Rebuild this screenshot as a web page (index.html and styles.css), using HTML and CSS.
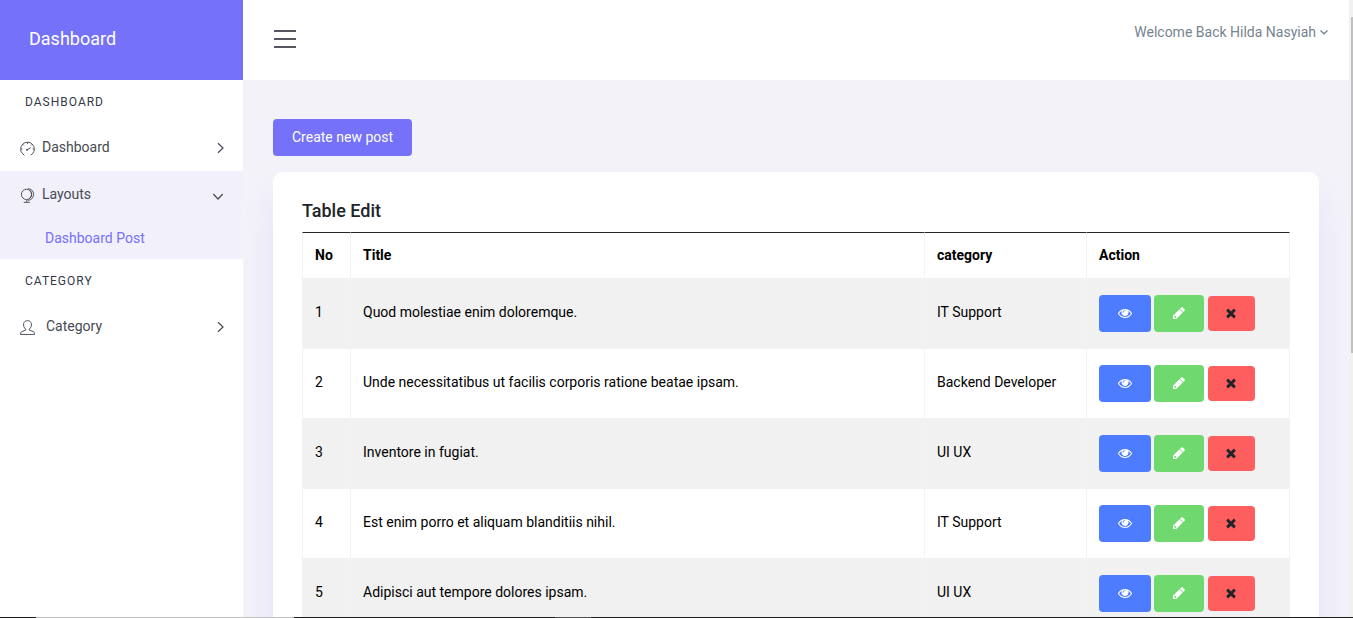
FILE: index.html
```html
<!DOCTYPE html>
<html lang="en">
<head>
<meta charset="utf-8">
<title>Dashboard</title>
<link rel="stylesheet" href="styles.css">
</head>
<body>
<svg class="sprite" aria-hidden="true">
  <symbol id="eye" viewBox="0 0 1792 1792"><path d="M1664 960q-152-236-381-353 61 104 61 225 0 185-131.500 316.500t-316.500 131.500-316.500-131.500-131.500-316.500q0-121 61-225-229 117-381 353 133 205 333.500 326.500t434.500 121.500 434.500-121.500 333.500-326.500zm-720-384q0-20-14-34t-34-14q-125 0-214.500 89.500t-89.500 214.500q0 20 14 34t34 14 34-14 14-34q0-86 61-147t147-61q20 0 34-14t14-34zm848 384q0 34-20 69-140 230-376.500 368.500t-499.500 138.500-499.500-139-376.500-368q-20-35-20-69t20-69q140-229 376.500-368t499.500-139 499.500 139 376.500 368q20 35 20 69z"/></symbol>
  <symbol id="pencil" viewBox="0 0 1792 1792"><path d="M491 1536l91-91-235-235-91 91v107h128v128h107zm469-1120l416 416-832 832h-416v-416zm683 96q0 53-37 90l-166 166-416-416 166-165q36-38 90-38 53 0 91 38l235 234q37 39 37 91z"/></symbol>
  <symbol id="times" viewBox="0 0 1792 1792"><path d="M1490 1322q0 40-28 68l-136 136q-28 28-68 28t-68-28l-294-294-294 294q-28 28-68 28t-68-28l-136-136q-28-28-28-68t28-68l294-294-294-294q-28-28-28-68t28-68l136-136q28-28 68-28t68 28l294 294 294-294q28-28 68-28t68 28l136 136q28 28 28 68t-28 68l-294 294 294 294q28 28 28 68z"/></symbol>
  <symbol id="chevron" viewBox="0 0 12 12"><path d="M4 1.300l5 4.700-5 4.700" fill="none" stroke="currentColor" stroke-width="1.200"/></symbol>
  <symbol id="caret" viewBox="0 0 10 10"><path d="M1.500 3.500l3.500 3.300 3.500-3.300" fill="none" stroke="currentColor" stroke-width="1.300"/></symbol>
</svg>
<div class="app">
  <aside class="sidebar">
    <a class="brand" href="#">Dashboard</a>
    <nav class="menu">
      <h2 class="menu-label">Dashboard</h2>
      <a class="menu-item" href="#">
        <svg class="menu-icon" viewBox="0 0 16 16"><path d="M4.500 15L2.700 13.600A7.300 7.300 0 1 1 13.300 13.600L11.500 15M8 1.500v1.700M1 8.500h1.500M13.500 8.500H15M3 3.500l1.200 1.200M13 3.500l-1.200 1.200M7.500 9.500l4-2.500"/><circle cx="7.500" cy="9.400" r=".7"/></svg>
        <span class="menu-text">Dashboard</span>
        <svg class="arrow"><use href="#chevron"/></svg>
      </a>
      <div class="menu-group">
        <a class="menu-item" href="#">
          <svg class="menu-icon" viewBox="0 0 16 16"><circle cx="7" cy="6.800" r="5.500"/><path d="M8.500 .8C16.500 .8 16.500 12.500 8.500 13.200M10.500 2.500Q14 6.500 10.500 11M7.200 12.500V15M4 15.300h6.500"/></svg>
          <span class="menu-text">Layouts</span>
          <svg class="arrow arrow-open"><use href="#chevron"/></svg>
        </a>
        <a class="submenu-item" href="#">Dashboard Post</a>
      </div>
      <h2 class="menu-label">Category</h2>
      <a class="menu-item" href="#">
        <svg class="menu-icon" viewBox="0 0 16 16"><path d="M6 9.700C2.300 6.500 3.300 .7 8 .7S13.700 6.500 10 9.700V10.800L14.500 12.500Q15.400 13 15.400 15.400H.6Q.6 13 1.500 12.500L6 10.800Z"/></svg>
        <span class="menu-text menu-text-wide">Category</span>
        <svg class="arrow"><use href="#chevron"/></svg>
      </a>
    </nav>
  </aside>
  <div class="page">
    <header class="topbar">
      <button class="hamburger" type="button" aria-label="Toggle menu"><svg class="bars" viewBox="0 0 22 18"><path d="M0 1h22M0 9h22M0 17h22"/></svg></button>
      <button class="user" type="button">Welcome Back Hilda Nasyiah <svg class="caret"><use href="#caret"/></svg></button>
    </header>
    <main class="content">
      <a class="btn btn-primary" href="#">Create new post</a>
      <section class="card">
        <h1 class="card-title">Table Edit</h1>
        <table class="posts">
          <colgroup><col class="col-no"><col><col class="col-category"><col class="col-action"></colgroup>
          <thead><tr><th>No</th><th>Title</th><th>category</th><th>Action</th></tr></thead>
          <tbody>
            <tr><td>1</td><td>Quod molestiae enim doloremque.</td><td>IT Support</td><td><a class="btn btn-view" href="#" aria-label="View"><svg class="icon"><use href="#eye"/></svg></a> <a class="btn btn-edit" href="#" aria-label="Edit"><svg class="icon"><use href="#pencil"/></svg></a> <button class="btn btn-delete" type="button" aria-label="Delete"><svg class="icon"><use href="#times"/></svg></button></td></tr>
            <tr><td>2</td><td>Unde necessitatibus ut facilis corporis ratione beatae ipsam.</td><td>Backend Developer</td><td><a class="btn btn-view" href="#" aria-label="View"><svg class="icon"><use href="#eye"/></svg></a> <a class="btn btn-edit" href="#" aria-label="Edit"><svg class="icon"><use href="#pencil"/></svg></a> <button class="btn btn-delete" type="button" aria-label="Delete"><svg class="icon"><use href="#times"/></svg></button></td></tr>
            <tr><td>3</td><td>Inventore in fugiat.</td><td>UI UX</td><td><a class="btn btn-view" href="#" aria-label="View"><svg class="icon"><use href="#eye"/></svg></a> <a class="btn btn-edit" href="#" aria-label="Edit"><svg class="icon"><use href="#pencil"/></svg></a> <button class="btn btn-delete" type="button" aria-label="Delete"><svg class="icon"><use href="#times"/></svg></button></td></tr>
            <tr><td>4</td><td>Est enim porro et aliquam blanditiis nihil.</td><td>IT Support</td><td><a class="btn btn-view" href="#" aria-label="View"><svg class="icon"><use href="#eye"/></svg></a> <a class="btn btn-edit" href="#" aria-label="Edit"><svg class="icon"><use href="#pencil"/></svg></a> <button class="btn btn-delete" type="button" aria-label="Delete"><svg class="icon"><use href="#times"/></svg></button></td></tr>
            <tr><td>5</td><td>Adipisci aut tempore dolores ipsam.</td><td>UI UX</td><td><a class="btn btn-view" href="#" aria-label="View"><svg class="icon"><use href="#eye"/></svg></a> <a class="btn btn-edit" href="#" aria-label="Edit"><svg class="icon"><use href="#pencil"/></svg></a> <button class="btn btn-delete" type="button" aria-label="Delete"><svg class="icon"><use href="#times"/></svg></button></td></tr>
          </tbody>
        </table>
      </section>
    </main>
  </div>
  <div class="scrollbar"><div class="thumb"></div></div>
</div>
<div class="edge"></div>
</body>
</html>
```
FILE: styles.css
```css
* { box-sizing: border-box; }
body {
  margin: 0;
  height: 100vh;
  display: flex;
  flex-direction: column;
  overflow: hidden;
  font: 14px/20px Roboto, sans-serif;
  color: #000;
  background: #f3f2f9;
}
a { color: inherit; text-decoration: none; }
button { font: inherit; border: 0; cursor: pointer; }
.sprite { display: none; }

.app { flex: 1; min-height: 0; display: flex; }
.sidebar { flex: 0 0 243px; background: #fff; }
.brand {
  display: flex;
  align-items: center;
  height: 80px;
  padding: 0 29px 2px;
  background: #7571f9;
  color: #fff;
  font-size: 18px;
}
.menu { color: #464a53; }
.menu-label {
  margin: 0;
  padding: 12px 25px;
  font-size: 12px;
  font-weight: 400;
  letter-spacing: 1px;
  text-transform: uppercase;
  color: #333a46;
}
.menu-item { display: flex; align-items: center; height: 47px; padding: 0 17px 2px 20px; }
.menu-icon { width: 15px; height: 15px; margin: 3px 7px 0 0; fill: none; stroke: currentColor; stroke-width: 1; }
.menu-text { flex: 1; }
.menu-text-wide { padding-left: 4px; }
.arrow { width: 12px; height: 12px; margin-top: 2px; }
.arrow-open { margin: 5px 2px 0 0; transform: rotate(90deg); }
.menu-group { background: #f2f0fb; }
.submenu-item { display: block; padding: 10px 45px 11px; color: #7571f9; }

.page { flex: 1; min-width: 0; display: flex; flex-direction: column; }
.topbar {
  flex: 0 0 80px;
  display: flex;
  justify-content: space-between;
  align-items: flex-start;
  padding: 22px 20px 0 30px;
  background: #fff;
}
.hamburger { display: flex; padding: 8px 1px; background: none; }
.bars { width: 22px; height: 18px; stroke: #55585f; stroke-width: 2; }
.user { display: flex; align-items: center; gap: 3px; padding: 0; background: none; color: #76838f; }
.caret { width: 10px; height: 10px; }

.content { flex: 1; min-height: 0; padding: 39px 30px 0; overflow: hidden; }
.btn {
  display: inline-flex;
  align-items: center;
  justify-content: center;
  height: 37px;
  padding: 0 18px;
  border-radius: 4px;
  vertical-align: middle;
  color: #fff;
}
.btn-primary { padding: 0 19px 2px; background: #7571f9; }
.btn-view { width: 52px; background: #4d7cff; }
.btn-edit { width: 50px; background: #6fd96f; }
.btn-delete { width: 47px; height: 35px; background: #ff5e5e; color: #212529; }
.icon { flex: none; width: 14px; height: 14px; fill: currentColor; }

.card {
  margin-top: 16px;
  padding: 29px 29px 30px;
  border-radius: 10px;
  background: #fff;
  box-shadow: 0 24px 32px rgba(117, 113, 249, .12);
}
.card-title { margin: 0 0 11px; font-size: 18px; line-height: 20px; font-weight: 500; color: #212529; }
.posts { width: 100%; table-layout: fixed; border-spacing: 0; }
.col-no { width: 48px; }
.col-category { width: 162px; }
.col-action { width: 204px; }
.posts th, .posts td {
  padding: 0 12px;
  border-left: 1px solid #f3f3f3;
  text-align: left;
}
.posts th:last-child, .posts td:last-child { border-right: 1px solid #f3f3f3; }
.posts th { height: 46px; padding-bottom: 2px; border-top: 1px solid #212529; font-weight: 700; }
.posts td { height: 70px; padding-bottom: 2px; }
.posts td:last-child { padding-bottom: 0; }
.posts tbody tr:nth-child(odd) { background: #f1f1f1; }
.posts tbody tr:nth-child(even) td { box-shadow: inset 0 1px #f1f1f1; }

.scrollbar { flex: 0 0 4px; padding: 17px 0 0 2px; background: #f1f1f1; }
.thumb { height: 56%; background: #c1c1c1; }
.edge {
  flex: 0 0 1px;
  background: linear-gradient(90deg, #1c1c1c 36px, #c0c0c0 36px 294px, #1c1c1c 294px 555px, #4d4d4d 555px 591px, #1c1c1c 591px);
}
```
